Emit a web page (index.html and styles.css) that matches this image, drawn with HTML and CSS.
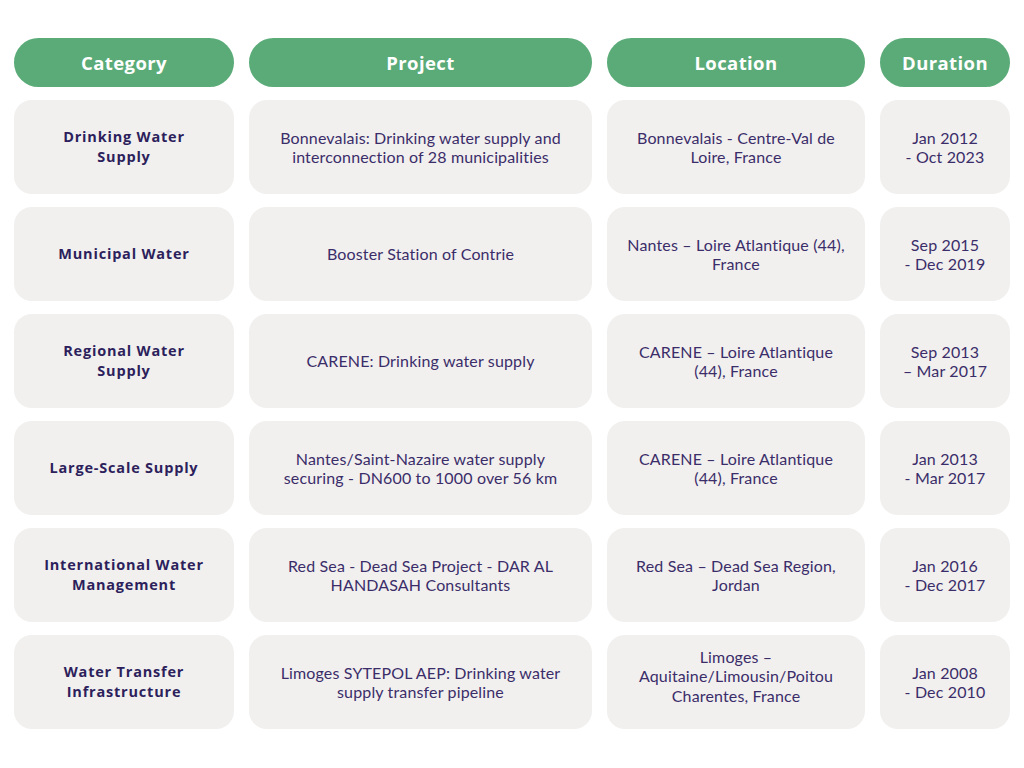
FILE: index.html
```html
<!DOCTYPE html>
<html lang="en">
<head>
<meta charset="utf-8">
<title>Projects</title>
<link rel="stylesheet" href="styles.css">
</head>
<body>
<div class="table">
  <div class="head">Category</div>
  <div class="head">Project</div>
  <div class="head">Location</div>
  <div class="head">Duration</div>

  <div class="cell cat">Drinking Water<br>Supply</div>
  <div class="cell">Bonnevalais: Drinking water supply and<br>interconnection of 28 municipalities</div>
  <div class="cell">Bonnevalais - Centre-Val de<br>Loire, France</div>
  <div class="cell">Jan 2012<br>- Oct 2023</div>

  <div class="cell cat">Municipal Water</div>
  <div class="cell">Booster Station of Contrie</div>
  <div class="cell">Nantes – Loire Atlantique (44),<br>France</div>
  <div class="cell">Sep 2015<br>- Dec 2019</div>

  <div class="cell cat">Regional Water<br>Supply</div>
  <div class="cell">CARENE: Drinking water supply</div>
  <div class="cell">CARENE – Loire Atlantique<br>(44), France</div>
  <div class="cell">Sep 2013<br>– Mar 2017</div>

  <div class="cell cat">Large-Scale Supply</div>
  <div class="cell">Nantes/Saint-Nazaire water supply<br>securing - DN600 to 1000 over 56 km</div>
  <div class="cell">CARENE – Loire Atlantique<br>(44), France</div>
  <div class="cell">Jan 2013<br>- Mar 2017</div>

  <div class="cell cat">International Water<br>Management</div>
  <div class="cell">Red Sea - Dead Sea Project - DAR AL<br>HANDASAH Consultants</div>
  <div class="cell">Red Sea – Dead Sea Region,<br>Jordan</div>
  <div class="cell">Jan 2016<br>- Dec 2017</div>

  <div class="cell cat">Water Transfer<br>Infrastructure</div>
  <div class="cell">Limoges SYTEPOL AEP: Drinking water<br>supply transfer pipeline</div>
  <div class="cell cell-tall">Limoges –<br>Aquitaine/Limousin/Poitou<br>Charentes, France</div>
  <div class="cell">Jan 2008<br>- Dec 2010</div>
</div>
</body>
</html>
```

FILE: styles.css
```css
html, body {
  margin: 0;
  padding: 0;
  background: #ffffff;
}
body {
  font-family: "Lato", "Noto Sans", sans-serif;
  padding: 38px 14px 0 14px;
}
.table {
  display: grid;
  grid-template-columns: 220px 343px 258px 130px;
  grid-template-rows: 49px repeat(6, 94px);
  column-gap: 15px;
  row-gap: 13px;
}
.head {
  background: #5aab78;
  color: #ffffff;
  border-radius: 25px;
  display: flex;
  align-items: center;
  justify-content: center;
  font-family: "Open Sans", "Lato", sans-serif;
  font-weight: 700;
  font-size: 18.5px;
  letter-spacing: 0.4px;
}
.cell {
  background: #f1f0ef;
  border-radius: 18px;
  display: flex;
  align-items: center;
  justify-content: center;
  text-align: center;
  color: #3b2d69;
  font-size: 16px;
  line-height: 19.5px;
  letter-spacing: 0.15px;
}
.cell-tall {
  line-height: 19.3px;
  padding-bottom: 12px;
  box-sizing: border-box;
}
.cat {
  font-family: "Open Sans", "Lato", sans-serif;
  font-weight: 700;
  color: #2d1f5c;
  font-size: 14.5px;
  line-height: 20px;
  letter-spacing: 0.8px;
}
```
